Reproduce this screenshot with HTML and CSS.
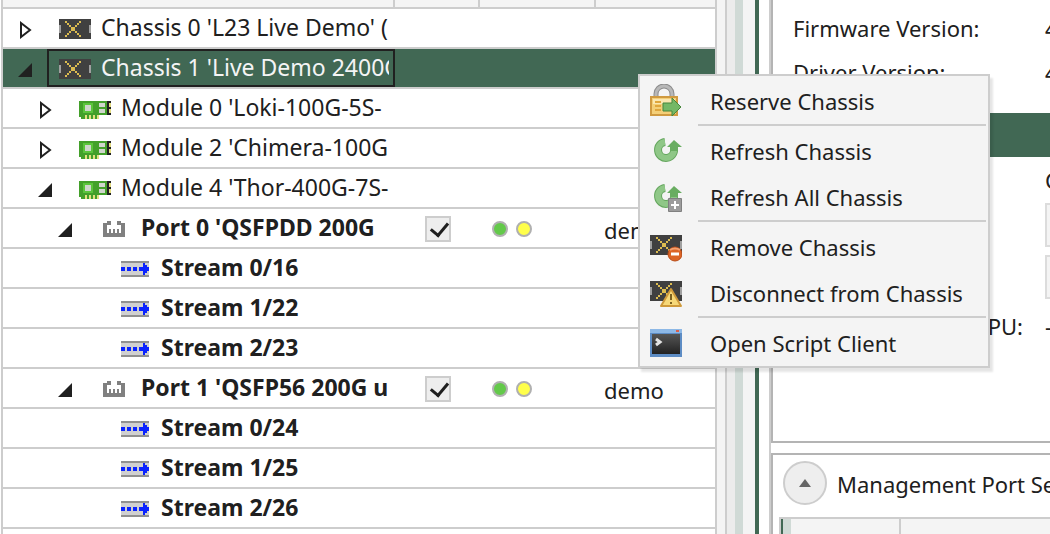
FILE: index.html
```html
<!DOCTYPE html>
<html lang="en">
<head>
<meta charset="utf-8">
<title>Chassis Explorer</title>
<link rel="stylesheet" href="styles.css">
</head>
<body>
<svg class="defs" aria-hidden="true">
  <symbol id="closed" viewBox="0 0 14 18"><path d="M3 2 12 9 3 16Z" fill="#fff" stroke="#202020" stroke-width="2"/></symbol>
  <symbol id="open" viewBox="0 0 14 14"><path d="M14 0V14H0Z" fill="#202020"/></symbol>
  <symbol id="chassis" viewBox="0 0 16 10" shape-rendering="crispEdges">
    <path d="M0 0h16v10H0z" fill="#404040"/><path d="M0 3h1v4H0zM15 3h1v4h-1z" fill="#a0a0a0"/>
    <path d="M3 1h1v1H3zM10 1h1v1h-1zM4 2h1v1H4zM9 2h1v1H9zM5 3h1v1H5zM8 3h1v1H8zM6 4h2v2H6zM5 6h1v1H5zM8 6h1v1H8zM4 7h1v1H4zM9 7h1v1H9zM3 8h1v1H3zM10 8h1v1h-1z" fill="#dcbc50"/>
  </symbol>
  <symbol id="module" viewBox="0 0 16 9" shape-rendering="crispEdges">
    <path d="M0 0h14v7h-4v2H1V8H0z" fill="#43a02a"/><path d="M2 1h5v5H2z" fill="#5cc43c"/><path d="M3 2h3v3H3zM10 1h3v2h-3zM10 4h3v2h-3z" fill="#d0d6cc"/>
    <path d="M3 7h1v2H3zM5 7h1v2H5zM7 7h1v2H7zM9 7h1v2H9z" fill="#e4e080"/><path d="M14 0h1v7h-1zM15 0h1v1h-1zM15 3h1v1h-1zM15 6h1v1h-1z" fill="#202020"/><path d="M15 1h1v2h-1zM15 4h1v2h-1z" fill="#e4dc80"/>
  </symbol>
  <symbol id="port" viewBox="0 0 11 8" shape-rendering="crispEdges"><path d="M0 1h2V0h2v2H2v4h1V4h1v2h1V4h1v2h1V4h1v2h1V2H7V0h2v1h2v7H0z" fill="#808080"/></symbol>
  <symbol id="stream" viewBox="0 0 14 8" shape-rendering="crispEdges"><path d="M0 0h14v8H0z" fill="#d0d0d0"/><path d="M0 0h14v1H0zM0 7h14v1H0z" fill="#909090"/><path d="M0 3h2v2H0zM3 3h2v2H3zM6 3h2v2H6zM9 3h2V1h1v1h1v1h1v2h-1v1h-1v1h-1V5H9z" fill="#0a22ff"/></symbol>
  <symbol id="lock" viewBox="0 0 32 34">
    <path d="M6 14V10a8 8 0 0 1 16 0v4" fill="none" stroke="#8c8c8c" stroke-width="5"/><path d="M6 14V10a8 8 0 0 1 16 0v4" fill="none" stroke="#b8b8b8" stroke-width="3"/>
    <path d="M1 13h26v18H1z" fill="#f4cf78" stroke="#d09a40" stroke-width="2"/><path d="M3 15h22v5H3z" fill="#fbe7b0"/><path d="M5 18h6M5 22h6M5 26h6" stroke="#e0a63c" stroke-width="2"/>
    <path d="M13 19h9v-5l9 9-9 9v-5h-9z" fill="#74b866" stroke="#47863c"/>
  </symbol>
  <symbol id="refresh" viewBox="0 0 32 34">
    <path d="M15 8A8 8 0 1 0 24 15" fill="none" stroke="#64a65d" stroke-width="8"/><path d="M15 8A8 8 0 1 0 24 15" fill="none" stroke="#8fc787" stroke-width="6"/>
    <path d="M17 13 24 6 32 13H28V17H20V13Z" fill="#69ad61"/>
  </symbol>
  <symbol id="plus" viewBox="0 0 14 14"><path d="M.5.5h13v13H.5z" fill="#9c9c9c" stroke="#808080"/><path d="M7 3v8M3 7h8" stroke="#fff" stroke-width="2"/></symbol>
  <linearGradient id="metal" x2="0" y2="1"><stop stop-color="#555"/><stop offset="1" stop-color="#222"/></linearGradient>
</svg>

<main class="app">
  <section class="explorer" aria-label="Chassis tree">
    <table class="tree">
      <colgroup><col class="c-name"><col class="c-check"><col class="c-state"><col></colgroup>
      <thead><tr><th></th><th></th><th></th><th></th></tr></thead>
      <tbody>
        <tr><td><div class="node l0"><svg class="tw"><use href="#closed"/></svg><div class="item"><svg class="ic chassis"><use href="#chassis"/></svg><span>Chassis 0 'L23 Live Demo' (10.20.1.170)</span></div></div></td><td></td><td></td><td></td></tr>
        <tr class="selected"><td><div class="node l0"><svg class="tw"><use href="#open"/></svg><div class="item"><svg class="ic chassis"><use href="#chassis"/></svg><span>Chassis 1 'Live Demo 2400G'</span></div></div></td><td></td><td></td><td></td></tr>
        <tr><td><div class="node l1"><svg class="tw"><use href="#closed"/></svg><div class="item"><svg class="ic module"><use href="#module"/></svg><span>Module 0 'Loki-100G-5S-</span></div></div></td><td></td><td></td><td></td></tr>
        <tr><td><div class="node l1"><svg class="tw"><use href="#closed"/></svg><div class="item"><svg class="ic module"><use href="#module"/></svg><span>Module 2 'Chimera-100G</span></div></div></td><td></td><td></td><td></td></tr>
        <tr><td><div class="node l1"><svg class="tw"><use href="#open"/></svg><div class="item"><svg class="ic module"><use href="#module"/></svg><span>Module 4 'Thor-400G-7S-</span></div></div></td><td></td><td></td><td></td></tr>
        <tr class="bold"><td><div class="node l2"><svg class="tw"><use href="#open"/></svg><div class="item"><svg class="ic port"><use href="#port"/></svg><span>Port 0 'QSFPDD 200G</span></div></div></td><td><input type="checkbox" checked aria-label="Reserve port 0"></td><td><div class="leds"><i class="led green"></i><i class="led yellow"></i></div></td><td class="owner">demo</td></tr>
        <tr class="bold"><td><div class="node l3"><svg class="tw"></svg><div class="item"><svg class="ic stream"><use href="#stream"/></svg><span>Stream 0/16</span></div></div></td><td></td><td></td><td></td></tr>
        <tr class="bold"><td><div class="node l3"><svg class="tw"></svg><div class="item"><svg class="ic stream"><use href="#stream"/></svg><span>Stream 1/22</span></div></div></td><td></td><td></td><td></td></tr>
        <tr class="bold"><td><div class="node l3"><svg class="tw"></svg><div class="item"><svg class="ic stream"><use href="#stream"/></svg><span>Stream 2/23</span></div></div></td><td></td><td></td><td></td></tr>
        <tr class="bold"><td><div class="node l2"><svg class="tw"><use href="#open"/></svg><div class="item"><svg class="ic port"><use href="#port"/></svg><span>Port 1 'QSFP56 200G u</span></div></div></td><td><input type="checkbox" checked aria-label="Reserve port 1"></td><td><div class="leds"><i class="led green"></i><i class="led yellow"></i></div></td><td class="owner">demo</td></tr>
        <tr class="bold"><td><div class="node l3"><svg class="tw"></svg><div class="item"><svg class="ic stream"><use href="#stream"/></svg><span>Stream 0/24</span></div></div></td><td></td><td></td><td></td></tr>
        <tr class="bold"><td><div class="node l3"><svg class="tw"></svg><div class="item"><svg class="ic stream"><use href="#stream"/></svg><span>Stream 1/25</span></div></div></td><td></td><td></td><td></td></tr>
        <tr class="bold"><td><div class="node l3"><svg class="tw"></svg><div class="item"><svg class="ic stream"><use href="#stream"/></svg><span>Stream 2/26</span></div></div></td><td></td><td></td><td></td></tr>
        <tr><td></td><td></td><td></td><td></td></tr>
      </tbody>
    </table>
  </section>
  <div class="splitter"><div class="groove"></div><div class="mint"></div></div>
  <section class="details">
    <div class="panel info">
      <dl class="facts">
        <dt>Firmware Version:</dt><dd>4</dd>
        <dt>Driver Version:</dt><dd>4</dd>
      </dl>
      <div class="band"></div>
      <div class="fields">
        <span class="tag">C</span>
        <input type="text" aria-label="Name"><input type="text" aria-label="Comment">
        <span class="cpu">CPU:</span><span class="dash">-</span>
      </div>
    </div>
    <div class="panel mgmt">
      <header><button class="fold" aria-label="Collapse"><svg viewBox="0 0 12 8"><path d="M6 0 12 8H0Z" fill="#666"/></svg></button><h2>Management Port Settings</h2></header>
      <div class="grid"><div class="mark"></div><div class="cell"></div><div class="cell"></div></div>
    </div>
  </section>
</main>

<div class="menu" role="menu">
  <button role="menuitem"><svg viewBox="0 0 32 34"><use href="#lock"/></svg>Reserve Chassis</button>
  <hr>
  <button role="menuitem"><svg viewBox="0 0 32 34"><use href="#refresh"/></svg>Refresh Chassis</button>
  <button role="menuitem"><svg viewBox="0 0 32 34"><use href="#refresh"/><use href="#plus" x="18" y="18" width="14" height="14"/></svg>Refresh All Chassis</button>
  <hr>
  <button role="menuitem"><svg viewBox="0 0 32 34"><use href="#chassis" y="5" width="32" height="20"/><circle cx="25" cy="24" r="7" fill="#dc6426" stroke="#b84c18"/><path d="M20 20a7 5 0 0 1 10 0" fill="none" stroke="#f2a070" stroke-width="2"/><path d="M21 24h8" stroke="#fff" stroke-width="3"/></svg>Remove Chassis</button>
  <button role="menuitem"><svg viewBox="0 0 32 34"><use href="#chassis" y="5" width="32" height="20"/><path d="M21 13 31 30H11Z" fill="#f6d878" stroke="#cf9a3a" stroke-width="2" stroke-linejoin="round"/><path d="M21 18v6M21 26v2" stroke="#7a6020" stroke-width="2"/></svg>Disconnect from Chassis</button>
  <hr>
  <button role="menuitem"><svg viewBox="0 0 32 34"><path d="M0 3h32v28H0z" fill="#5d8cc4"/><path d="M0 3h32v4H0z" fill="#8db8e6"/><path d="M26 4h3v2h-3z" fill="#d8604c"/><path d="M2 8h28v20H2z" fill="url(#metal)"/><path d="m6 13 4 3-4 3" fill="none" stroke="#e4e4e4" stroke-width="3"/></svg>Open Script Client</button>
</div>
</body>
</html>
```
FILE: styles.css
```css
* { box-sizing: border-box; }
body { margin: 0; height: 100vh; overflow: hidden; background: #fff; color: #202020; font: 22px/30px "Noto Sans", sans-serif; }
.defs { position: absolute; width: 0; height: 0; }
.app { display: flex; height: 100%; overflow: hidden; }

.explorer { flex: 0 0 716px; margin-left: 1px; border: solid #cdcdcd; border-width: 0 2px; }
.tree { width: 100%; table-layout: fixed; border-collapse: separate; border-spacing: 0; }
.c-name { width: 392px; }
.c-check { width: 85px; }
.c-state { width: 116px; }
th, td { padding: 0; border-bottom: 2px solid #cdcdcd; }
th { height: 9px; background: #f4f4f4; border-right: 2px solid #cdcdcd; }
th:last-child { border-right: 0; }
td { height: 40px; vertical-align: middle; }
.node { display: flex; align-items: center; height: 38px; }
.l1 { padding-left: 20px; }
.l2 { padding-left: 40px; }
.l3 { padding-left: 60px; }
.tw { flex: none; width: 14px; height: 18px; margin: 4px 15px 0; }
.item { flex: 1; min-width: 0; height: 38px; display: flex; align-items: center; gap: 10px; padding: 0 4px 0 10px; border: 2px solid transparent; }
.item span { flex: 1; min-width: 0; overflow: hidden; white-space: nowrap; height: 34px; font-size: 23px; line-height: 32px; }
.ic { flex: none; margin-top: 2px; }
.chassis { width: 32px; height: 20px; }
.module { width: 32px; height: 18px; margin-top: 4px; }
.port { width: 22px; height: 16px; margin: 2px 6px 0 4px; }
.stream { width: 28px; height: 16px; margin: 2px 2px 0; }
.selected td { background: #416854; color: #f4f4f4; }
.selected .item { border-color: #202020; }
.bold .item { font-weight: 700; }
td input { appearance: none; display: block; width: 26px; height: 26px; margin: 2px 0 0 30px; border: 2px solid #cdcdcd; background: #eee; }
td input:checked::before { content: ""; display: block; width: 8px; height: 14px; margin: 1px 0 0 7px; border: solid #202020; border-width: 0 3px 3px 0; transform: rotate(40deg); }
.leds { display: flex; gap: 8px; padding: 2px 0 0 12px; }
.led { width: 16px; height: 16px; border-radius: 50%; border: 2px solid #b0b0b0; }
.green { background: #63c94a; }
.yellow { background: #ffff4a; }
.owner { padding: 4px 0 0 8px; }

.splitter { flex: none; display: flex; width: 42px; padding-left: 8px; background: #f4f4f4; border-right: 4px solid #416854; }
.groove { width: 10px; border-left: 2px solid #cdcdcd; background: #ececec; }
.mint { width: 8px; background: #d0dad6; }

.details { flex: 1; min-width: 0; display: flex; flex-direction: column; gap: 10px; margin-left: 10px; border-left: 2px solid #cdcdcd; overflow: hidden; }
.panel { flex: none; border: solid #b4b4b4; border-width: 0 0 2px 2px; }
.info { height: 443px; }
.facts { display: grid; grid-template-columns: 252px 1fr; row-gap: 14px; margin: 13px 0 0 20px; }
.facts dd { margin: 0; }
.band { height: 44px; margin-top: 26px; background: #416854; }
.fields { display: grid; grid-template-columns: 240px 1fr; column-gap: 22px; row-gap: 8px; padding: 10px 0 0 10px; }
.tag, .fields input { grid-column: 2; }
.tag { margin-top: -2px; }
.fields input { width: 100%; height: 44px; border: 2px solid #dcdcdc; border-right: 0; background: #f4f4f4; }
.cpu, .dash { margin-top: 4px; }
.cpu { text-align: right; }
.mgmt { border-top: 2px solid #b4b4b4; }
.mgmt header { display: flex; align-items: center; gap: 10px; padding: 6px 0 0 10px; }
.fold { flex: none; width: 44px; height: 44px; padding: 0; border: 2px solid #cdcdcd; border-radius: 50%; background: #eee; }
.fold svg { width: 12px; height: 8px; display: block; margin: auto; }
h2 { margin: 2px 0 0; font-size: 22px; line-height: 30px; font-weight: 400; white-space: nowrap; }
.grid { display: flex; height: 60px; margin: 12px 0 0 6px; border: solid #cdcdcd; border-width: 2px 0 0 2px; background: #f4f4f4; }
.mark { width: 10px; border-left: 2px solid #416854; background: #d0dad6; }
.cell { width: 110px; border-right: 2px solid #cdcdcd; }
.cell:last-child { flex: 1; border: 0; }

.menu { position: absolute; left: 638px; top: 74px; width: 352px; padding-top: 2px; border: 2px solid #cdcdcd; background: #f4f4f4; box-shadow: 3px 4px 2px #0000001a; }
.menu button { display: flex; align-items: center; gap: 28px; width: 100%; height: 46px; padding: 0 0 0 10px; border: 0; background: none; color: inherit; font: inherit; text-align: left; white-space: nowrap; }
.menu svg { flex: none; width: 32px; height: 34px; }
.menu hr { height: 2px; margin: 0 2px 2px 58px; border: 0; background: #cdcdcd; }
```
